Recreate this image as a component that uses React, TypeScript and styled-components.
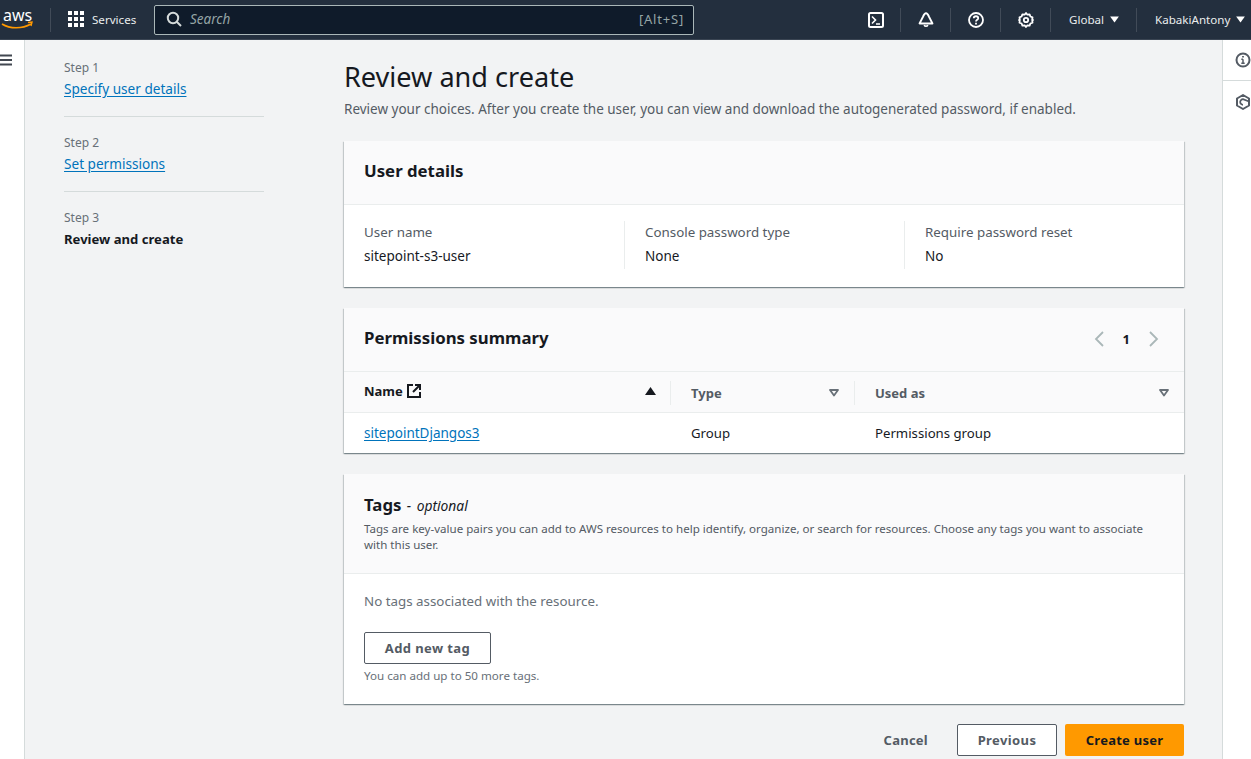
import styled, { createGlobalStyle } from 'styled-components';

const GlobalStyle = createGlobalStyle`
  html, body {
    margin: 0;
    padding: 0;
    height: 100%;
    overflow: hidden;
  }
  body {
    font-family: "Noto Sans", "Open Sans", sans-serif;
    font-size: 13.5px;
    color: #16191f;
    background: #f2f3f4;
  }
  * { box-sizing: border-box; }
`;

const AwsLogo = () => (
  <svg width="36" height="32" viewBox="0 0 36 32" fill="none">
    <text x="3" y="17" fill="#fff" fontFamily="Noto Sans" fontSize="16">aws</text>
    <path d="M2 20c8 5 20 5 29 0" stroke="#ff9900" strokeWidth="1.6" />
    <path d="M28 18.5l4-.5-1 4" stroke="#ff9900" strokeWidth="1.4" />
  </svg>
);

const GridIcon = () => (
  <svg width="16" height="16" viewBox="0 0 16 16" fill="#fff">
    {[0, 6, 12].flatMap(y => [0, 6, 12].map(x => <rect key={`${x}-${y}`} x={x} y={y} width="4" height="4" />))}
  </svg>
);

const SearchIcon = () => (
  <svg width="16" height="16" viewBox="0 0 16 16" fill="none" stroke="#d5dbdb" strokeWidth="2">
    <circle cx="7" cy="7" r="5.2" />
    <path d="M11 11l4 4" />
  </svg>
);

const ShellIcon = () => (
  <svg width="16" height="16" viewBox="0 0 16 16" fill="none" stroke="#fff" strokeWidth="2">
    <rect x="1" y="1" width="14" height="14" rx="1.5" />
    <path d="M4 4.5L7.5 8 4 11.5M8 12h4" strokeWidth="1.6" />
  </svg>
);

const BellIcon = () => (
  <svg width="16" height="16" viewBox="0 0 16 16" fill="none" stroke="#fff" strokeWidth="2">
    <path d="M8 1.2c-1.5 0-2 1.3-2.8 3.2L1.6 11.4h12.8L10.8 4.4C10 2.5 9.5 1.2 8 1.2z" strokeLinejoin="round" />
    <path d="M6.2 13a1.9 1.9 0 0 0 3.6 0" strokeWidth="1.6" />
  </svg>
);

const HelpIcon = () => (
  <svg width="16" height="16" viewBox="0 0 16 16" fill="none" stroke="#fff" strokeWidth="1.8">
    <circle cx="8" cy="8" r="7" />
    <path d="M5.8 6.2C5.8 3.6 10.2 3.6 10.2 6.2c0 1.6-2.2 1.6-2.2 3.3" />
    <path d="M8 10.8v1.6" />
  </svg>
);

const GearIcon = () => (
  <svg width="16" height="16" viewBox="0 0 16 16" fill="none" stroke="#fff" strokeWidth="1.8">
    <path d="M8 1l1.4 1.7 2.2-.3.8 2.1 2.1.8-.3 2.2L15 8l-.8.5.3 2.2-2.1.8-.8 2.1-2.2-.3L8 15l-1.4-1.7-2.2.3-.8-2.1-2.1-.8.3-2.2L1 8l.8-.5-.3-2.2 2.1-.8.8-2.1 2.2.3z" strokeLinejoin="round" />
    <circle cx="8" cy="8" r="2.2" />
  </svg>
);

const CaretDown = () => (
  <svg width="9" height="7" viewBox="0 0 10 8" fill="#fff">
    <path d="M0 .5h10L5 7.5z" />
  </svg>
);

const MenuIcon = () => (
  <svg width="12" height="12" viewBox="0 0 12 12" stroke="#414750" strokeWidth="1.8">
    <path d="M0 1.5h12M0 6h12M0 10.5h12" />
  </svg>
);

const InfoIcon = () => (
  <svg width="16" height="16" viewBox="0 0 16 16" fill="none" stroke="#545b64" strokeWidth="2">
    <circle cx="8" cy="8" r="6.5" />
    <path d="M8 7.2v4M6.3 11.2h3.4M6.3 7.2H8" strokeWidth="1.5" />
    <path d="M8 4v1.6" strokeWidth="1.8" />
  </svg>
);

const HexIcon = () => (
  <svg width="16" height="16" viewBox="0 0 16 16" fill="none" stroke="#545b64" strokeWidth="2">
    <path d="M8 1l6 3.5v7L8 15l-6-3.5v-7z" strokeLinejoin="round" />
    <path d="M14 7.5L8 5.2a2.8 2.8 0 1 0 0 5.6" strokeWidth="1.8" />
  </svg>
);

const ExternalIcon = () => (
  <svg width="14" height="14" viewBox="0 0 14 14" fill="none" stroke="#16191f" strokeWidth="2">
    <path d="M6 1H1v12h12V8" />
    <path d="M8 1h5v5M13 1L6 8" />
  </svg>
);

const Chevron = ({ dir }: { dir: 'left' | 'right' }) => (
  <svg width="10" height="16" viewBox="0 0 10 16" fill="none" stroke="#aab7b8" strokeWidth="1.8">
    <path d={dir === 'left' ? 'M9 1L2 8l7 7' : 'M1 1l7 7-7 7'} />
  </svg>
);

const SortSolid = () => (
  <svg width="11" height="8" viewBox="0 0 11 8" fill="#16191f">
    <path d="M5.5 0L11 8H0z" />
  </svg>
);

const SortOutline = () => (
  <svg width="10" height="8" viewBox="0 0 10 8" fill="none" stroke="#687078" strokeWidth="1.8">
    <path d="M1 1h8L5 6.5z" strokeLinejoin="round" />
  </svg>
);

const Page = styled.div`
  display: flex;
  flex-direction: column;
  height: 759px;
  overflow: hidden;
`;

const TopBar = styled.header`
  display: flex;
  align-items: center;
  flex: 0 0 40px;
  height: 40px;
  background: #232f3e;
  border-bottom: 1px solid #3a4553;
  color: #eaeded;
`;

const LogoSlot = styled.div`
  display: flex;
  align-items: center;
  width: 51px;
  height: 24px;
  margin-right: 17px;
  border-right: 1px solid #414b58;
`;

const ServicesLink = styled.div`
  display: flex;
  align-items: center;
  gap: 8px;
  width: 86px;
  font-size: 11.6px;
  svg {
    margin-top: -1px;
  }
`;

const SearchBox = styled.div`
  display: flex;
  align-items: center;
  width: 540px;
  height: 30px;
  padding: 0 9px 1px 11px;
  background: #0f1b2a;
  border: 1px solid #aab7b8;
  border-radius: 2px;
`;

const SearchPlaceholder = styled.span`
  flex: 1;
  margin-left: 8px;
  font-style: italic;
  font-size: 13.5px;
  color: #95a5a6;
`;

const SearchHint = styled.span`
  font-size: 13px;
  letter-spacing: 0.8px;
  color: #95a5a6;
`;

const BarRight = styled.div`
  display: flex;
  align-items: center;
  margin-left: auto;
`;

const BarIcon = styled.div`
  display: flex;
  align-items: center;
  justify-content: center;
  width: 50px;
  height: 24px;
  border-right: 1px solid #414b58;
`;

const BarMenu = styled.div<{ $w: number }>`
  display: flex;
  align-items: center;
  gap: 6px;
  width: ${({ $w }) => $w}px;
  height: 24px;
  padding-left: 18px;
  font-size: 11.6px;
  white-space: nowrap;
`;

const Divided = styled(BarMenu)`
  border-right: 1px solid #414b58;
`;

const Body = styled.div`
  display: flex;
  flex: 1;
  min-height: 0;
`;

const Rail = styled.aside<{ $side: 'left' | 'right' }>`
  flex: 0 0 ${({ $side }) => ($side === 'left' ? 25 : 28)}px;
  background: #fff;
  border-${({ $side }) => ($side === 'left' ? 'right' : 'left')}: 1px solid #d5dbdb;
`;

const RailIcon = styled.div<{ $last?: boolean }>`
  display: flex;
  align-items: center;
  height: 41px;
  padding-left: 12px;
  border-bottom: ${({ $last }) => ($last ? 'none' : '1px solid #d5dbdb')};
`;

const MenuSlot = styled.div`
  padding-top: 14px;
  line-height: 0;
`;

const Wizard = styled.div`
  display: flex;
  flex: 1;
  padding: 0 39px;
  min-width: 0;
`;

const StepNav = styled.nav`
  flex: 0 0 200px;
  margin-right: 80px;
  padding-top: 17px;
`;

const Step = styled.div<{ $last?: boolean }>`
  height: 60px;
  padding-top: 3px;
  border-bottom: ${({ $last }) => ($last ? 'none' : '1px solid #d5dbdb')};
  & + & {
    height: 75px;
    padding-top: 18px;
  }
`;

const StepLabel = styled.div`
  font-size: 12px;
  line-height: 16px;
  color: #687078;
  margin-bottom: 5px;
`;

const StepLink = styled.a`
  display: block;
  width: fit-content;
  font-size: 13.6px;
  line-height: 16px;
  color: #0073bb;
  text-decoration: underline;
  text-underline-offset: 2px;
`;

const StepCurrent = styled.div`
  font-size: 13.1px;
  line-height: 16px;
  font-weight: 700;
  color: #16191f;
`;

const Main = styled.main`
  flex: 0 0 840px;
  padding-top: 19px;
`;

const Title = styled.h1`
  margin: 0;
  font-size: 27.1px;
  line-height: 36px;
  font-weight: 400;
  color: #16191f;
`;

const Subtitle = styled.p`
  margin: 5px 0 23px;
  font-size: 13.5px;
  line-height: 18px;
  color: #545b64;
`;

const Card = styled.section`
  background: #fff;
  box-shadow: 0 1px 1px 0 rgba(0, 28, 36, 0.3), 1px 1px 1px 0 rgba(0, 28, 36, 0.15), -1px 1px 1px 0 rgba(0, 28, 36, 0.15);
  margin-bottom: 21px;
`;

const CardHead = styled.div`
  display: flex;
  align-items: center;
  height: 64px;
  padding: 0 20px 4px;
  background: #fafafb;
  border-bottom: 1px solid #eaeded;
`;

const CardTitle = styled.h2`
  margin: 0;
  font-size: 16.8px;
  line-height: 22px;
  font-weight: 700;
  color: #16191f;
`;

const Pager = styled.div`
  display: flex;
  align-items: center;
  gap: 19px;
  margin-left: auto;
  padding: 2px 5px 0 0;
  font-size: 13px;
  font-weight: 700;
`;

const Details = styled.div`
  display: grid;
  grid-template-columns: 260px 280px 1fr;
  padding: 16px 20px 0;
  height: 82px;
`;

const DetailCol = styled.div<{ $line?: boolean }>`
  height: 48px;
  padding-left: ${({ $line }) => ($line ? 20 : 0)}px;
  border-left: ${({ $line }) => ($line ? '1px solid #eaeded' : 'none')};
`;

const DetailKey = styled.div`
  font-size: 13.35px;
  line-height: 22px;
  color: #545b64;
  margin-bottom: 2px;
`;

const DetailValue = styled.div`
  line-height: 22px;
  color: #16191f;
`;

const TableHead = styled.div`
  display: grid;
  grid-template-columns: 326px 184px 1fr;
  height: 41px;
  background: #fafafb;
  border-bottom: 1px solid #eaeded;
`;

const HeadCell = styled.div<{ $line?: boolean }>`
  position: relative;
  display: flex;
  align-items: center;
  justify-content: space-between;
  gap: 6px;
  padding: 2px 15px 0 21px;
  font-size: 13px;
  font-weight: 700;
  color: #545b64;
  &::before {
    content: '';
    display: ${({ $line }) => ($line ? 'block' : 'none')};
    position: absolute;
    left: 0;
    top: 9px;
    height: 24px;
    width: 1px;
    background: #eaeded;
  }
`;

const NameCell = styled(HeadCell)`
  padding: 0 14px 3px 20px;
  color: #16191f;
`;

const NameWrap = styled.span`
  display: flex;
  align-items: center;
  gap: 4px;
`;

const TableRow = styled.div`
  display: grid;
  grid-template-columns: 326px 184px 1fr;
  align-items: center;
  height: 40px;
  font-size: 13.2px;
`;

const Cell = styled.div`
  padding-left: 21px;
  &:first-child {
    padding-left: 20px;
  }
`;

const RowLink = styled.a`
  font-size: 13.5px;
  color: #0073bb;
  text-decoration: underline;
  text-underline-offset: 2px;
`;

const TagsHead = styled.div`
  height: 100px;
  padding: 20px 20px 0;
  background: #fafafb;
  border-bottom: 1px solid #eaeded;
`;

const Optional = styled.i`
  margin-left: -1px;
  font-size: 13.8px;
  font-weight: 400;
  color: #16191f;
`;

const TagsTitle = styled(CardTitle)`
  word-spacing: 2px;
`;

const TagsHint = styled.p`
  margin: 4px 0 0;
  font-size: 11.55px;
  line-height: 16px;
  color: #545b64;
  max-width: 790px;
`;

const TagsBody = styled.div`
  height: 130px;
  padding: 18px 20px 0;
`;

const Empty = styled.div`
  font-size: 13.35px;
  line-height: 18px;
  color: #687078;
  margin-bottom: 22px;
`;

const OutlineButton = styled.button<{ $w: number }>`
  width: ${({ $w }) => $w}px;
  height: 32px;
  padding: 0;
  background: #fff;
  border: 1px solid #545b64;
  border-radius: 2px;
  font-family: inherit;
  font-size: 13px;
  font-weight: 700;
  letter-spacing: 0.4px;
  color: #545b64;
`;

const TagsLimit = styled.div`
  margin-top: 4px;
  font-size: 11.6px;
  line-height: 16px;
  color: #687078;
`;

const Actions = styled.div`
  display: flex;
  justify-content: flex-end;
  align-items: center;
  margin-top: -1px;
`;

const TextButton = styled.button`
  margin-right: 29px;
  padding: 0;
  background: none;
  border: none;
  font-family: inherit;
  font-size: 13px;
  font-weight: 700;
  letter-spacing: 0.25px;
  color: #545b64;
`;

const PrimaryButton = styled.button`
  width: 119px;
  height: 32px;
  margin-left: 8px;
  padding: 0;
  background: #ff9900;
  border: none;
  border-radius: 2px;
  font-family: inherit;
  font-size: 13px;
  font-weight: 700;
  letter-spacing: 0.25px;
  color: #16191f;
`;

export default function App() {
  return (
    <>
      <GlobalStyle />
      <Page>
        <TopBar>
          <LogoSlot>
            <AwsLogo />
          </LogoSlot>
          <ServicesLink>
            <GridIcon />
            Services
          </ServicesLink>
          <SearchBox>
            <SearchIcon />
            <SearchPlaceholder>Search</SearchPlaceholder>
            <SearchHint>[Alt+S]</SearchHint>
          </SearchBox>
          <BarRight>
            <BarIcon><ShellIcon /></BarIcon>
            <BarIcon><BellIcon /></BarIcon>
            <BarIcon><HelpIcon /></BarIcon>
            <BarIcon><GearIcon /></BarIcon>
            <Divided $w={86}>Global <CaretDown /></Divided>
            <BarMenu $w={114}>KabakiAntony <CaretDown /></BarMenu>
          </BarRight>
        </TopBar>
        <Body>
          <Rail $side="left">
            <MenuSlot><MenuIcon /></MenuSlot>
          </Rail>
          <Wizard>
            <StepNav>
              <Step>
                <StepLabel>Step 1</StepLabel>
                <StepLink>Specify user details</StepLink>
              </Step>
              <Step>
                <StepLabel>Step 2</StepLabel>
                <StepLink>Set permissions</StepLink>
              </Step>
              <Step $last>
                <StepLabel>Step 3</StepLabel>
                <StepCurrent>Review and create</StepCurrent>
              </Step>
            </StepNav>
            <Main>
              <Title>Review and create</Title>
              <Subtitle>Review your choices. After you create the user, you can view and download the autogenerated password, if enabled.</Subtitle>
              <Card>
                <CardHead>
                  <CardTitle>User details</CardTitle>
                </CardHead>
                <Details>
                  <DetailCol>
                    <DetailKey>User name</DetailKey>
                    <DetailValue>sitepoint-s3-user</DetailValue>
                  </DetailCol>
                  <DetailCol $line>
                    <DetailKey>Console password type</DetailKey>
                    <DetailValue>None</DetailValue>
                  </DetailCol>
                  <DetailCol $line>
                    <DetailKey>Require password reset</DetailKey>
                    <DetailValue>No</DetailValue>
                  </DetailCol>
                </Details>
              </Card>
              <Card>
                <CardHead>
                  <CardTitle>Permissions summary</CardTitle>
                  <Pager>
                    <Chevron dir="left" />
                    <span>1</span>
                    <Chevron dir="right" />
                  </Pager>
                </CardHead>
                <TableHead>
                  <NameCell>
                    <NameWrap>Name <ExternalIcon /></NameWrap>
                    <SortSolid />
                  </NameCell>
                  <HeadCell $line>Type <SortOutline /></HeadCell>
                  <HeadCell $line>Used as <SortOutline /></HeadCell>
                </TableHead>
                <TableRow>
                  <Cell><RowLink>sitepointDjangos3</RowLink></Cell>
                  <Cell>Group</Cell>
                  <Cell>Permissions group</Cell>
                </TableRow>
              </Card>
              <Card>
                <TagsHead>
                  <TagsTitle>Tags <Optional>- optional</Optional></TagsTitle>
                  <TagsHint>Tags are key-value pairs you can add to AWS resources to help identify, organize, or search for resources. Choose any tags you want to associate with this user.</TagsHint>
                </TagsHead>
                <TagsBody>
                  <Empty>No tags associated with the resource.</Empty>
                  <OutlineButton $w={127}>Add new tag</OutlineButton>
                  <TagsLimit>You can add up to 50 more tags.</TagsLimit>
                </TagsBody>
              </Card>
              <Actions>
                <TextButton>Cancel</TextButton>
                <OutlineButton $w={100}>Previous</OutlineButton>
                <PrimaryButton>Create user</PrimaryButton>
              </Actions>
            </Main>
          </Wizard>
          <Rail $side="right">
            <RailIcon><InfoIcon /></RailIcon>
            <RailIcon $last><HexIcon /></RailIcon>
          </Rail>
        </Body>
      </Page>
    </>
  );
}
